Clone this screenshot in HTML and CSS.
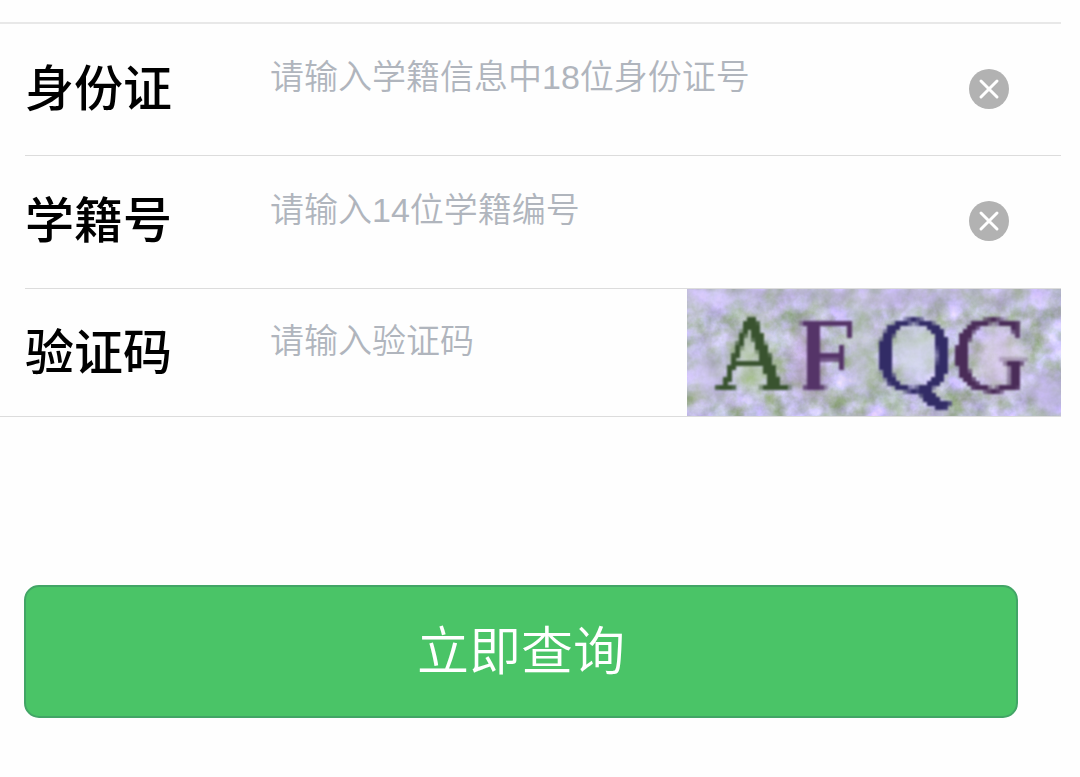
FILE: index.html
```html
<!doctype html>
<html lang="zh-CN">
<head>
  <meta charset="UTF-8" />
  <meta name="viewport" content="width=device-width, initial-scale=1.0" />
  <title>学籍查询</title>
  <link rel="stylesheet" href="styles.css">
</head>
<body>

  <form class="query-form">
    <div class="fields">
      <div class="row">
        <label for="id-card">身份证</label>
        <input id="id-card" name="id-card" type="text" placeholder="请输入学籍信息中18位身份证号" />
        <button class="clear" type="button" aria-label="清除身份证">
          <svg viewBox="0 0 40 40" width="40" height="40">
            <circle cx="20" cy="20" r="20" fill="#b2b2b2" />
            <path d="M12 12L28 28M28 12L12 28" stroke="#fff" stroke-width="3" stroke-linecap="round" />
          </svg>
        </button>
      </div>

      <div class="row">
        <label for="student-no">学籍号</label>
        <input id="student-no" name="student-no" type="text" placeholder="请输入14位学籍编号" />
        <button class="clear" type="button" aria-label="清除学籍号">
          <svg viewBox="0 0 40 40" width="40" height="40">
            <circle cx="20" cy="20" r="20" fill="#b2b2b2" />
            <path d="M12 12L28 28M28 12L12 28" stroke="#fff" stroke-width="3" stroke-linecap="round" />
          </svg>
        </button>
      </div>

      <div class="row code-row">
        <label for="code">验证码</label>
        <input id="code" name="code" type="text" placeholder="请输入验证码" />
        <button class="code-image" type="button" aria-label="换一张验证码">
          <svg viewBox="0 0 374 127">
            <defs>
              <!-- grey-green to lavender, all channels follow the same noise -->
              <filter id="noise" x="0" y="0" width="100%" height="100%" color-interpolation-filters="sRGB">
                <feTurbulence type="fractalNoise" baseFrequency="0.05 0.05" numOctaves="4" seed="8" />
                <feColorMatrix values="0.5 0.12 0 0 0.42  0.3 0.22 0 0 0.48  0.9 0 0.12 0 0.3  0 0 0 0 1" />
              </filter>
              <!-- one sample per 4px cell, grown back to fill the cell -->
              <filter id="pixels" filterUnits="userSpaceOnUse" x="0" y="0" width="374" height="127" color-interpolation-filters="sRGB">
                <feFlood x="2" y="2" width="1" height="1" flood-color="#000" />
                <feComposite width="4" height="4" />
                <feTile result="grid" />
                <feComposite in="SourceGraphic" in2="grid" operator="in" />
                <feMorphology operator="dilate" radius="2" />
                <feGaussianBlur stdDeviation="1" />
              </filter>
              <filter id="soft">
                <feGaussianBlur stdDeviation="9" />
              </filter>
            </defs>
            <rect width="374" height="127" filter="url(#noise)" />
            <g filter="url(#soft)">
              <path d="M0 0H374V10H300L210 18L90 10L0 18Z" fill="#cdbdf2" opacity=".7" />
              <ellipse cx="22" cy="85" rx="22" ry="26" fill="#cdc0f0" opacity=".6" />
              <ellipse cx="66" cy="66" rx="20" ry="38" fill="#b5cf9c" opacity=".6" />
              <ellipse cx="122" cy="72" rx="14" ry="38" fill="#b98ccb" opacity=".5" />
              <ellipse cx="175" cy="60" rx="12" ry="50" fill="#b4bfb2" opacity=".6" />
              <ellipse cx="230" cy="64" rx="26" ry="30" fill="#d3d8e6" opacity=".7" />
              <ellipse cx="312" cy="70" rx="24" ry="34" fill="#dccbe2" opacity=".6" />
              <ellipse cx="360" cy="105" rx="20" ry="18" fill="#c3b4f0" opacity=".7" />
            </g>
            <g class="code-text" filter="url(#pixels)">
              <text x="26" y="102" fill="#39532f">A</text>
              <text x="109" y="102" fill="#553468">F</text>
              <text x="188" y="102" fill="#322c66">Q</text>
              <text x="265" y="102" fill="#4a2c58">G</text>
            </g>
          </svg>
        </button>
      </div>
    </div>

    <button class="submit" type="submit">立即查询</button>
  </form>

</body>
</html>
```

FILE: styles.css
```css
* {
  box-sizing: border-box;
}

body {
  margin: 0;
  background: #fefefe;
  font-family: "Liberation Sans", "Noto Sans CJK SC", sans-serif;
}

button, input {
  border: 0;
  padding: 0;
  background: none;
  font-family: inherit;
}

.query-form {
  padding: 22px 19px 58px 0;
}

.fields {
  border-top: 2px solid #e8e8e8;
  border-bottom: 1px solid #dcdcdc;
}

.row {
  display: flex;
  align-items: center;
  height: 132px;
  margin-left: 25px;
  padding-bottom: 2px;
  border-bottom: 1px solid #dcdcdc;
}

.row + .row {
  height: 133px;
}

label {
  width: 245px;
  flex-shrink: 0;
  color: #000;
  font-size: 49px;
  font-weight: 500;
  line-height: 72px;
}

input {
  flex: 1;
  min-width: 0;
  height: 72px;
  padding-bottom: 22px;
  outline: none;
  color: #333;
  font-size: 34px;
  font-weight: 350;
}

input::placeholder {
  color: #b0b5bd;
  opacity: 1;
}

.clear {
  width: 40px;
  height: 40px;
  margin-right: 52px;
}

svg {
  display: block;
}

.row.code-row {
  height: 127px;
  padding-bottom: 0;
  border-bottom: 0;
}

.code-image {
  width: 374px;
  flex-shrink: 0;
}

.code-text {
  font-family: "Liberation Serif", serif;
  font-size: 108px;
}

.submit {
  display: block;
  width: calc(100% - 67px);
  height: 133px;
  margin: 168px 43px 0 24px;
  padding-bottom: 8px;
  border: 2px solid #42a566;
  border-radius: 15px;
  background: #4ac467;
  color: #fff;
  font-size: 52px;
  font-weight: 350;
}
```
